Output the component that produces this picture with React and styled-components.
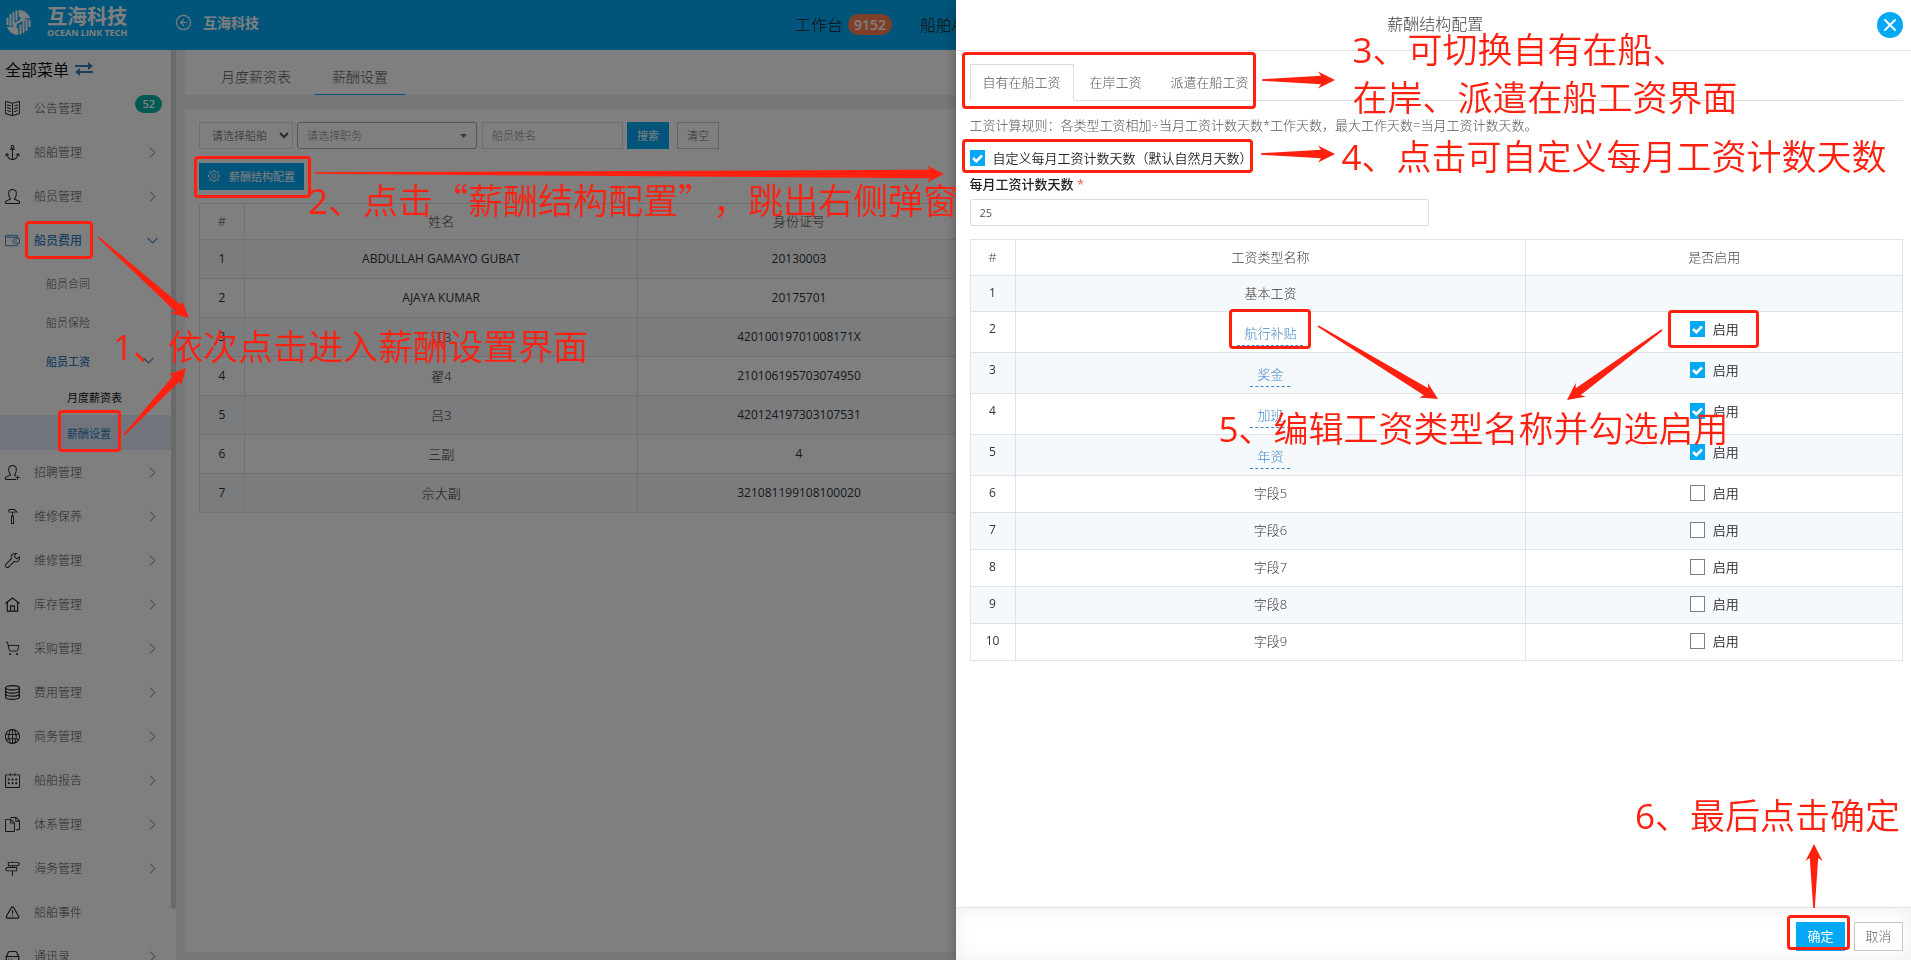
import { Fragment, useState } from "react";
import styled, { createGlobalStyle, css } from "styled-components";
import {
  ChevronDown,
  ChevronRight,
  CircleArrowLeft,
  HardDrive,
  ShoppingCart,
  TriangleAlert,
  X,
} from "lucide-react";
import {
  SlAnchor,
  SlBookOpen,
  SlCalender,
  SlDirections,
  SlDocs,
  SlGlobe,
  SlSettings,
  SlUser,
  SlUserFollow,
  SlWrench,
} from "react-icons/sl";
import { TfiHummer } from "react-icons/tfi";

const blue = "#03a9f4";
const red = "#ff2010";
const line = "#dfe3e8";

const GlobalStyle = createGlobalStyle`
  * {
    box-sizing: border-box;
  }
  body {
    margin: 0;
    overflow: hidden;
    font-family: "Open Sans", "Noto Sans CJK SC", sans-serif;
    font-size: 13px;
    font-weight: 300;
    color: #333;
  }
  button, input, select {
    font-family: inherit;
    font-weight: inherit;
  }
  a {
    text-decoration: none;
    color: inherit;
  }
`;

const Page = styled.div`
  display: flex;
  flex-direction: column;
  height: 100vh;
  background: #eceff3;
`;

/* top bar */

const Header = styled.header`
  flex: none;
  display: flex;
  align-items: center;
  height: 50px;
  overflow: hidden;
  white-space: nowrap;
  color: white;
  background: ${blue};
`;

const Brand = styled.a`
  display: flex;
  align-items: center;
  gap: 15px;
  width: 175px;
  padding: 0 5px 6px;
`;

const BrandName = styled.div`
  font-size: 20px;
  line-height: 20px;
  font-weight: 700;
`;

const BrandSub = styled.div`
  font-size: 9px;
  line-height: 11px;
  font-weight: 700;
`;

const Company = styled.a`
  display: flex;
  align-items: center;
  gap: 11px;
  height: 44px;
  align-self: flex-start;
  font-size: 14px;
  font-weight: 700;
`;

const TopNav = styled.nav`
  display: flex;
  align-items: center;
  gap: 28px;
  flex: 0 0 58.4%;
  margin-left: auto;
  padding-bottom: 2px;
  font-size: 16px;
  color: #222;
`;

const TopLink = styled.a`
  display: flex;
  align-items: center;
  gap: 5px;
`;

const Count = styled.span`
  border-radius: 11px;
  padding: 0 6px;
  font-size: 14px;
  line-height: 21px;
  font-weight: 600;
  color: white;
  background: #ff7f50;
`;

/* side menu */

const Body = styled.div`
  flex: 1;
  min-height: 0;
  display: flex;
`;

const Sidebar = styled.aside`
  flex: none;
  display: flex;
  width: 176px;
  background: white;
`;

const Menu = styled.nav`
  flex: 1;
  overflow: hidden;
`;

const ScrollThumb = styled.div`
  width: 5px;
  height: 94.4%;
  border-radius: 0 0 3px 3px;
  background: #d4d4d4;
`;

const MenuTitle = styled.div`
  display: flex;
  align-items: center;
  gap: 6px;
  height: 36px;
  padding: 2px 5px 0;
  font-size: 16px;
  font-weight: 400;
  color: #111;
  svg {
    color: #3a7fb8;
  }
`;

const MenuItem = styled.a`
  display: flex;
  align-items: center;
  height: 44px;
  padding: 0 9px 0 5px;
  font-size: 12px;
  color: ${(p) => (p.$active ? "#2f7fc4" : "#555")};
  font-weight: ${(p) => (p.$active ? 500 : 300)};
  > svg:first-child {
    width: 15px;
    height: 15px;
    margin-right: 14px;
    color: ${(p) => (p.$active ? "#3a7fb8" : "#222")};
  }
`;

const SubItem = styled(MenuItem)`
  height: 39px;
  padding: 2px 13px 0 46px;
  font-size: 11px;
`;

const LeafItem = styled.a`
  display: flex;
  align-items: center;
  height: ${(p) => (p.$active ? "35px" : "36px")};
  padding-left: 67px;
  font-size: 11px;
  font-weight: 400;
  color: ${(p) => (p.$active ? "#2f7fc4" : "#111")};
  background: ${(p) => (p.$active ? "#e3eaf6" : "none")};
`;

const Label = styled.span`
  flex: 1;
`;

const MenuBadge = styled.span`
  margin-bottom: 8px;
  border-radius: 9px;
  padding: 0 7px;
  font-size: 11px;
  line-height: 18px;
  font-weight: 600;
  color: white;
  background: #00b5a6;
`;

/* main area */

const Main = styled.main`
  flex: 1;
  min-width: 0;
  display: flex;
  flex-direction: column;
  gap: 14px;
  padding: 0 9px 8px;
`;

const TabBar = styled.div`
  flex: none;
  display: flex;
  align-items: flex-end;
  gap: 5px;
  height: 45px;
  padding-left: 18px;
  background: white;
`;

const PageTab = styled.a`
  height: 36px;
  padding: 0 18px;
  font-size: 14px;
  line-height: 36px;
  color: #555;
  box-shadow: ${(p) => (p.$active ? `inset 0 -1px ${blue}` : "none")};
`;

const Card = styled.section`
  flex: 1;
  padding: 13px 14px;
  background: white;
`;

const Filters = styled.form`
  display: flex;
  gap: 4px;
  margin-bottom: 14px;
`;

const fieldBox = css`
  height: 27px;
  border: 1px solid #ddd;
  padding: 0 9px;
  font-size: 11px;
  color: #555;
  background: white;
  &::placeholder {
    color: #888;
  }
`;

const ShipSelect = styled.select`
  ${fieldBox}
  width: 94px;
  padding: 0 0 0 8px;
`;

const DutyBox = styled.div`
  position: relative;
  width: 180px;
  margin-right: 1px;
`;

const DutySelect = styled.select`
  ${fieldBox}
  width: 100%;
  border-color: #aaa;
  border-radius: 3px;
  appearance: none;
  color: #888;
`;

const Caret = styled.svg`
  position: absolute;
  right: 10px;
  top: 12px;
  width: 7px;
  height: 4px;
  fill: #777;
  pointer-events: none;
`;

const NameInput = styled.input`
  ${fieldBox}
  width: 141px;
`;

const Button = styled.button`
  height: ${(p) => (p.$large ? "29px" : "27px")};
  min-width: ${(p) => (p.$large ? "49px" : "42px")};
  border: 1px solid ${(p) => (p.$primary ? blue : "#c6c6c6")};
  padding: 0 8px 2px;
  font-size: ${(p) => (p.$large ? "13px" : "11px")};
  font-weight: ${(p) => (p.$primary ? 400 : 300)};
  color: ${(p) => (p.$primary ? "white" : "#666")};
  background: ${(p) => (p.$primary ? blue : "white")};
`;

const ClearButton = styled(Button)`
  margin-left: 4px;
`;

const ConfigButton = styled(Button)`
  display: flex;
  align-items: center;
  gap: 9px;
  margin-bottom: 13px;
  svg {
    width: 12px;
    height: 12px;
  }
`;

const Table = styled.table`
  width: 100%;
  table-layout: fixed;
  border-collapse: collapse;
  tbody tr:nth-child(odd) {
    background: #f6f9fc;
  }
`;

const Th = styled.th`
  width: ${(p) => p.$width || "auto"};
  height: 36px;
  border: 1px solid ${line};
  padding: 0 0 2px;
  font-weight: 300;
  color: #444;
`;

const Td = styled.td`
  height: 39px;
  border: 1px solid ${line};
  padding: 0 0 2px;
  text-align: center;
  font-size: ${(p) => (p.$latin ? "12px" : "13px")};
  font-weight: ${(p) => (p.$latin ? 400 : 300)};
`;

/* drawer */

const Mask = styled.div`
  position: fixed;
  inset: 0;
  background: rgba(0, 0, 0, 0.5);
`;

const Drawer = styled.aside`
  position: fixed;
  top: 0;
  right: 0;
  bottom: 0;
  width: 50%;
  display: flex;
  flex-direction: column;
  background: white;
  box-shadow: 0 0 12px rgba(0, 0, 0, 0.3);
`;

const DrawerHeader = styled.header`
  flex: none;
  display: flex;
  align-items: center;
  height: 51px;
  padding: 0 8px 1px 38px;
  border-bottom: 1px solid #e5e5e5;
`;

const DrawerTitle = styled.h2`
  flex: 1;
  margin: 0;
  padding-bottom: 3px;
  text-align: center;
  font-size: 16px;
  font-weight: 300;
  color: #444;
`;

const CloseButton = styled.button`
  display: flex;
  align-items: center;
  justify-content: center;
  width: 26px;
  height: 26px;
  border: none;
  border-radius: 50%;
  padding: 0;
  color: white;
  background: ${blue};
`;

const DrawerBody = styled.div`
  flex: 1;
  min-height: 0;
  padding: 13px 8px 0 14px;
`;

const Tabs = styled.div`
  display: flex;
  gap: 3px;
  height: 37px;
  border-bottom: 1px solid #ddd;
`;

const Tab = styled.button`
  height: 37px;
  border: 1px solid ${(p) => (p.$active ? "#ddd" : "transparent")};
  border-bottom-color: ${(p) => (p.$active ? "white" : "transparent")};
  padding: 0 12px 2px;
  font-size: 13px;
  color: #555;
  background: none;
`;

const Rule = styled.p`
  margin: 14px 0 15px;
  line-height: 20px;
  color: #555;
`;

const CheckLabel = styled.label`
  display: inline-flex;
  align-items: flex-start;
  gap: 8px;
  height: 19px;
  line-height: 16px;
  vertical-align: top;
  font-weight: 350;
  color: #222;
`;

const CheckBox = styled.input`
  appearance: none;
  width: 15px;
  height: 16px;
  margin: 0;
  border: 1px solid #75808b;
  background: white;
  &:checked {
    border-color: ${blue};
    background: ${blue}
      url("data:image/svg+xml,%3Csvg xmlns='http://www.w3.org/2000/svg' viewBox='0 0 15 16'%3E%3Cpath d='M3 8l3.300 3.200L12 5.500' fill='none' stroke='white' stroke-width='2.600'/%3E%3C/svg%3E")
      center / 15px 16px no-repeat;
  }
`;

const DaysLabel = styled.label`
  display: block;
  margin: 5px 0;
  line-height: 20px;
  font-weight: 500;
  color: #222;
  span {
    color: #f2604a;
  }
`;

const DaysInput = styled.input`
  ${fieldBox}
  display: block;
  width: calc(50% - 7px);
  margin-bottom: 13px;
  border-radius: 2px;
  font-weight: 400;
`;

const ConfigTd = styled(Td)`
  height: auto;
  padding: ${(p) => (p.$check ? "9px 8px 8px" : "8px 8px 9px")};
  line-height: 18px;
  vertical-align: top;
`;

const EditLink = styled.a`
  display: inline-block;
  margin-bottom: -3px;
  border-bottom: 1px dashed #3a87cf;
  padding: 4px 7px 3px;
  vertical-align: top;
  color: #428bca;
`;

const DrawerFooter = styled.footer`
  flex: none;
  display: flex;
  justify-content: flex-end;
  gap: 9px;
  padding: 14px 8px 9px;
  border-top: 1px solid #e2e2e2;
  box-shadow: inset 0 0 20px rgba(0, 0, 0, 0.07);
`;

/* walkthrough marks drawn over the page */

const NoteLayer = styled.div`
  position: absolute;
  inset: 0;
  z-index: 2;
  pointer-events: none;
`;

const Frame = styled.div`
  position: absolute;
  left: ${(p) => p.$x}px;
  top: ${(p) => p.$y}px;
  width: ${(p) => p.$w}px;
  height: ${(p) => p.$h}px;
  border: 3px solid ${red};
  border-radius: 4px;
`;

const CornerFrame = styled(Frame)`
  left: auto;
  top: auto;
  right: 61px;
  bottom: 10px;
`;

const Note = styled.p`
  position: absolute;
  left: ${(p) => p.$x}px;
  top: ${(p) => p.$y}px;
  margin: 0;
  white-space: nowrap;
  font-family: "Noto Sans CJK SC", sans-serif;
  font-size: 35px;
  line-height: 46px;
  font-weight: 350;
  text-spacing-trim: space-all;
  color: ${red};
`;

const CornerNote = styled(Note)`
  left: auto;
  top: auto;
  right: 11px;
  bottom: 121px;
`;

const Step = styled.span`
  font-family: "Open Sans", sans-serif;
  font-weight: 400;
`;

const ArrowCanvas = styled.svg`
  position: absolute;
  left: 0;
  top: 0;
  width: 100%;
  height: 100%;
  overflow: visible;
  fill: ${red};
`;

const CornerCanvas = styled.svg`
  position: absolute;
  right: 87px;
  bottom: 52px;
  width: 20px;
  height: 64px;
  fill: ${red};
`;

const Arrow = ({ from, to }) => {
  const dx = to[0] - from[0];
  const dy = to[1] - from[1];
  const len = Math.hypot(dx, dy);
  const angle = (Math.atan2(dy, dx) * 180) / Math.PI;
  const neck = len - 14;
  const barb = len - 17;
  return (
    <polygon
      transform={`translate(${from[0]} ${from[1]}) rotate(${angle})`}
      points={`0,-0.8 ${neck},-4.2 ${barb},-8.5 ${len},0 ${barb},8.5 ${neck},4.2 0,0.8`}
    />
  );
};

const Logo = () => (
  <svg width="27" height="27" viewBox="0 0 27 27" fill="none" stroke="white">
    <path d="M14 1.500a12 12 0 0 1 10.500 7.500l-10-1z" fill="white" />
    <path d="M13 25.500a12 12 0 0 1-10.500-7.500l10 1z" fill="white" />
    <path d="M11.500 1.500v10M8.500 3v13M5.500 5v12M2.500 9v7" strokeWidth="2" />
    <path d="M15.500 25.500v-10M18.500 24V11M21.500 22V10M24.500 18v-7" strokeWidth="2" />
    <path d="M8 16l12-6.500M7 19l5-3M15 11l5-3" strokeWidth="2" />
  </svg>
);

const SwapIcon = () => (
  <svg width="18" height="14" viewBox="0 0 18 14" fill="currentColor">
    <path d="M0 3h13V0l5 4-5 4V5H0z" />
    <path d="M18 9H5V6l-5 4 5 4v-3h13z" />
  </svg>
);

const WalletIcon = () => (
  <svg viewBox="0 0 16 16" fill="none" stroke="currentColor">
    <path d="M13.500 6V2.500h-13v11h13V11M0.500 4.500h13" />
    <path d="M15.500 6H11a2.500 2.500 0 0 0 0 5h4.500z" />
    <path d="M11 8.500h1.500" />
  </svg>
);

const HouseIcon = () => (
  <svg viewBox="0 0 16 16" fill="none" stroke="currentColor" strokeWidth="1.2">
    <path d="M0.500 7L8 1l7.500 6M2.500 5.500v9.500h11V5.500M6 15V9.500h4V15" />
  </svg>
);

const CoinsIcon = () => (
  <svg viewBox="0 0 16 16" fill="none" stroke="currentColor" strokeWidth="1.3">
    <ellipse cx="8" cy="3" rx="7.300" ry="2.300" />
    <path d="M0.700 3v10c0 3 14.600 3 14.600 0V3" />
    <path d="M0.700 6.300c0 3 14.600 3 14.600 0M0.700 9.600c0 3 14.600 3 14.600 0" />
  </svg>
);

const Chevron = ({ open }) =>
  open ? (
    <ChevronDown size={19} strokeWidth={1.3} color="#3a7fb8" />
  ) : (
    <ChevronRight size={19} strokeWidth={1.3} color="#888" />
  );

const payrollMenu = (
  <>
    <SubItem href="#contract"><Label>船员合同</Label></SubItem>
    <SubItem href="#insurance"><Label>船员保险</Label></SubItem>
    <SubItem href="#wage" $active>
      <Label>船员工资</Label>
      <Chevron open />
    </SubItem>
    <LeafItem href="#monthly">月度薪资表</LeafItem>
    <LeafItem href="#setting" $active>薪酬设置</LeafItem>
  </>
);

const menu = [
  { name: "公告管理", icon: <SlBookOpen />, badge: 52 },
  { name: "船舶管理", icon: <SlAnchor />, more: true },
  { name: "船员管理", icon: <SlUser />, more: true },
  { name: "船员费用", icon: <WalletIcon />, more: true, children: payrollMenu },
  { name: "招聘管理", icon: <SlUserFollow />, more: true },
  { name: "维修保养", icon: <TfiHummer />, more: true },
  { name: "维修管理", icon: <SlWrench />, more: true },
  { name: "库存管理", icon: <HouseIcon />, more: true },
  { name: "采购管理", icon: <ShoppingCart strokeWidth={1.5} />, more: true },
  { name: "费用管理", icon: <CoinsIcon />, more: true },
  { name: "商务管理", icon: <SlGlobe />, more: true },
  { name: "船舶报告", icon: <SlCalender />, more: true },
  { name: "体系管理", icon: <SlDocs />, more: true },
  { name: "海务管理", icon: <SlDirections />, more: true },
  { name: "船舶事件", icon: <TriangleAlert strokeWidth={1.8} /> },
  { name: "通讯录", icon: <HardDrive strokeWidth={1.8} />, more: true },
];

const crew = [
  ["ABDULLAH GAMAYO GUBAT", "20130003"],
  ["AJAYA KUMAR", "20175701"],
  ["江3", "42010019701008171X"],
  ["翟4", "210106195703074950"],
  ["吕3", "420124197303107531"],
  ["三副", "4"],
  ["佘大副", "321081199108100020"],
];

const wageTypes = [
  { name: "基本工资", fixed: true },
  { name: "航行补贴", enabled: true },
  { name: "奖金", enabled: true },
  { name: "加班", enabled: true },
  { name: "年资", enabled: true },
  { name: "字段5" },
  { name: "字段6" },
  { name: "字段7" },
  { name: "字段8" },
  { name: "字段9" },
];

const wageTabs = ["自有在船工资", "在岸工资", "派遣在船工资"];

const SideMenu = () => (
  <Sidebar>
    <Menu>
      <MenuTitle>
        全部菜单
        <SwapIcon />
      </MenuTitle>
      {menu.map((item) => (
        <Fragment key={item.name}>
          <MenuItem href="#menu" $active={!!item.children}>
            {item.icon}
            <Label>{item.name}</Label>
            {item.badge && <MenuBadge>{item.badge}</MenuBadge>}
            {item.more && <Chevron open={!!item.children} />}
          </MenuItem>
          {item.children}
        </Fragment>
      ))}
    </Menu>
    <ScrollThumb />
  </Sidebar>
);

const CrewTable = () => (
  <Table>
    <thead>
      <tr>
        <Th $width="45px">#</Th>
        <Th $width="23.3%">姓名</Th>
        <Th $width="19.1%">身份证号</Th>
        <Th />
      </tr>
    </thead>
    <tbody>
      {crew.map(([name, id], i) => (
        <tr key={id}>
          <Td $latin>{i + 1}</Td>
          <Td $latin={/^[A-Z ]+$/.test(name)}>{name}</Td>
          <Td $latin>{id}</Td>
          <Td />
        </tr>
      ))}
    </tbody>
  </Table>
);

const WageTable = () => {
  const [types, setTypes] = useState(wageTypes);

  const toggle = (index) =>
    setTypes(types.map((t, i) => (i === index ? { ...t, enabled: !t.enabled } : t)));

  return (
    <Table>
      <thead>
        <tr>
          <Th $width="45px">#</Th>
          <Th>工资类型名称</Th>
          <Th $width="40.4%">是否启用</Th>
        </tr>
      </thead>
      <tbody>
        {types.map((type, i) => (
          <tr key={type.name}>
            <ConfigTd $latin>{i + 1}</ConfigTd>
            <ConfigTd>
              {type.enabled ? <EditLink href="#edit">{type.name}</EditLink> : type.name}
            </ConfigTd>
            <ConfigTd $check>
              {!type.fixed && (
                <CheckLabel>
                  <CheckBox type="checkbox" checked={!!type.enabled} onChange={() => toggle(i)} />
                  启用
                </CheckLabel>
              )}
            </ConfigTd>
          </tr>
        ))}
      </tbody>
    </Table>
  );
};

const ConfigDrawer = () => {
  const [tab, setTab] = useState(wageTabs[0]);

  return (
    <Drawer>
      <DrawerHeader>
        <DrawerTitle>薪酬结构配置</DrawerTitle>
        <CloseButton aria-label="关闭">
          <X size={20} strokeWidth={2.4} />
        </CloseButton>
      </DrawerHeader>
      <DrawerBody>
        <Tabs>
          {wageTabs.map((name) => (
            <Tab key={name} $active={name === tab} onClick={() => setTab(name)}>
              {name}
            </Tab>
          ))}
        </Tabs>
        <Rule>
          工资计算规则：各类型工资相加÷当月工资计数天数*工作天数，最大工作天数=当月工资计数天数。
        </Rule>
        <CheckLabel>
          <CheckBox type="checkbox" defaultChecked />
          自定义每月工资计数天数（默认自然月天数）
        </CheckLabel>
        <DaysLabel htmlFor="days">
          每月工资计数天数 <span>*</span>
        </DaysLabel>
        <DaysInput id="days" defaultValue="25" />
        <WageTable />
      </DrawerBody>
      <DrawerFooter>
        <Button $primary $large>确定</Button>
        <Button $large>取消</Button>
      </DrawerFooter>
      <NoteLayer>
        <Frame $x={6} $y={52} $w={294} $h={57} />
        <Frame $x={6} $y={139} $w={291} $h={34} />
        <Frame $x={273} $y={309} $w={82} $h={40} />
        <Frame $x={712} $y={310} $w={91} $h={38} />
        <CornerFrame $w={63} $h={35} />
        <ArrowCanvas>
          <Arrow from={[306, 80]} to={[379, 80]} />
          <Arrow from={[305, 154]} to={[379, 154]} />
          <Arrow from={[362, 326]} to={[482, 399]} />
          <Arrow from={[706, 330]} to={[611, 400]} />
        </ArrowCanvas>
        <CornerCanvas>
          <Arrow from={[10, 64]} to={[10, 0]} />
        </CornerCanvas>
        <Note $x={397} $y={25}>
          <Step>3</Step>、可切换自有在船、
          <br />
          在岸、派遣在船工资界面
        </Note>
        <Note $x={386} $y={132}><Step>4</Step>、点击可自定义每月工资计数天数</Note>
        <Note $x={263} $y={404}><Step>5</Step>、编辑工资类型名称并勾选启用</Note>
        <CornerNote><Step>6</Step>、最后点击确定</CornerNote>
      </NoteLayer>
    </Drawer>
  );
};

const App = () => {
  return (
    <>
      <GlobalStyle />
      <Page>
        <Header>
          <Brand href="#home">
            <Logo />
            <div>
              <BrandName>互海科技</BrandName>
              <BrandSub>OCEAN LINK TECH</BrandSub>
            </div>
          </Brand>
          <Company href="#company">
            <CircleArrowLeft size={17} strokeWidth={1.6} />
            互海科技
          </Company>
          <TopNav>
            <TopLink href="#work">
              工作台 <Count>9152</Count>
            </TopLink>
            <TopLink href="#ais">船舶AIS</TopLink>
          </TopNav>
        </Header>
        <Body>
          <SideMenu />
          <Main>
            <TabBar>
              <PageTab href="#monthly">月度薪资表</PageTab>
              <PageTab href="#setting" $active>薪酬设置</PageTab>
            </TabBar>
            <Card>
              <Filters onSubmit={(e) => e.preventDefault()}>
                <ShipSelect aria-label="船舶">
                  <option>请选择船舶</option>
                </ShipSelect>
                <DutyBox>
                  <DutySelect aria-label="职务">
                    <option>请选择职务</option>
                  </DutySelect>
                  <Caret viewBox="0 0 7 4"><path d="M0 0h7L3.500 4z" /></Caret>
                </DutyBox>
                <NameInput aria-label="船员姓名" placeholder="船员姓名" />
                <Button $primary>搜索</Button>
                <ClearButton type="reset">清空</ClearButton>
              </Filters>
              <ConfigButton $primary>
                <SlSettings />
                薪酬结构配置
              </ConfigButton>
              <CrewTable />
            </Card>
          </Main>
        </Body>
      </Page>
      <Mask />
      <ConfigDrawer />
      <NoteLayer>
        <Frame $x={25} $y={221} $w={68} $h={38} />
        <Frame $x={58} $y={410} $w={63} $h={42} />
        <Frame $x={194} $y={156} $w={117} $h={42} />
        <ArrowCanvas>
          <Arrow from={[98, 237]} to={[189, 318]} />
          <Arrow from={[124, 435]} to={[186, 368]} />
          <Arrow from={[315, 173]} to={[944, 174]} />
        </ArrowCanvas>
        <Note $x={113} $y={322}><Step>1</Step>、依次点击进入薪酬设置界面</Note>
        <Note $x={308} $y={176}><Step>2</Step>、点击“薪酬结构配置”，跳出右侧弹窗</Note>
      </NoteLayer>
    </>
  );
};

export default App;
